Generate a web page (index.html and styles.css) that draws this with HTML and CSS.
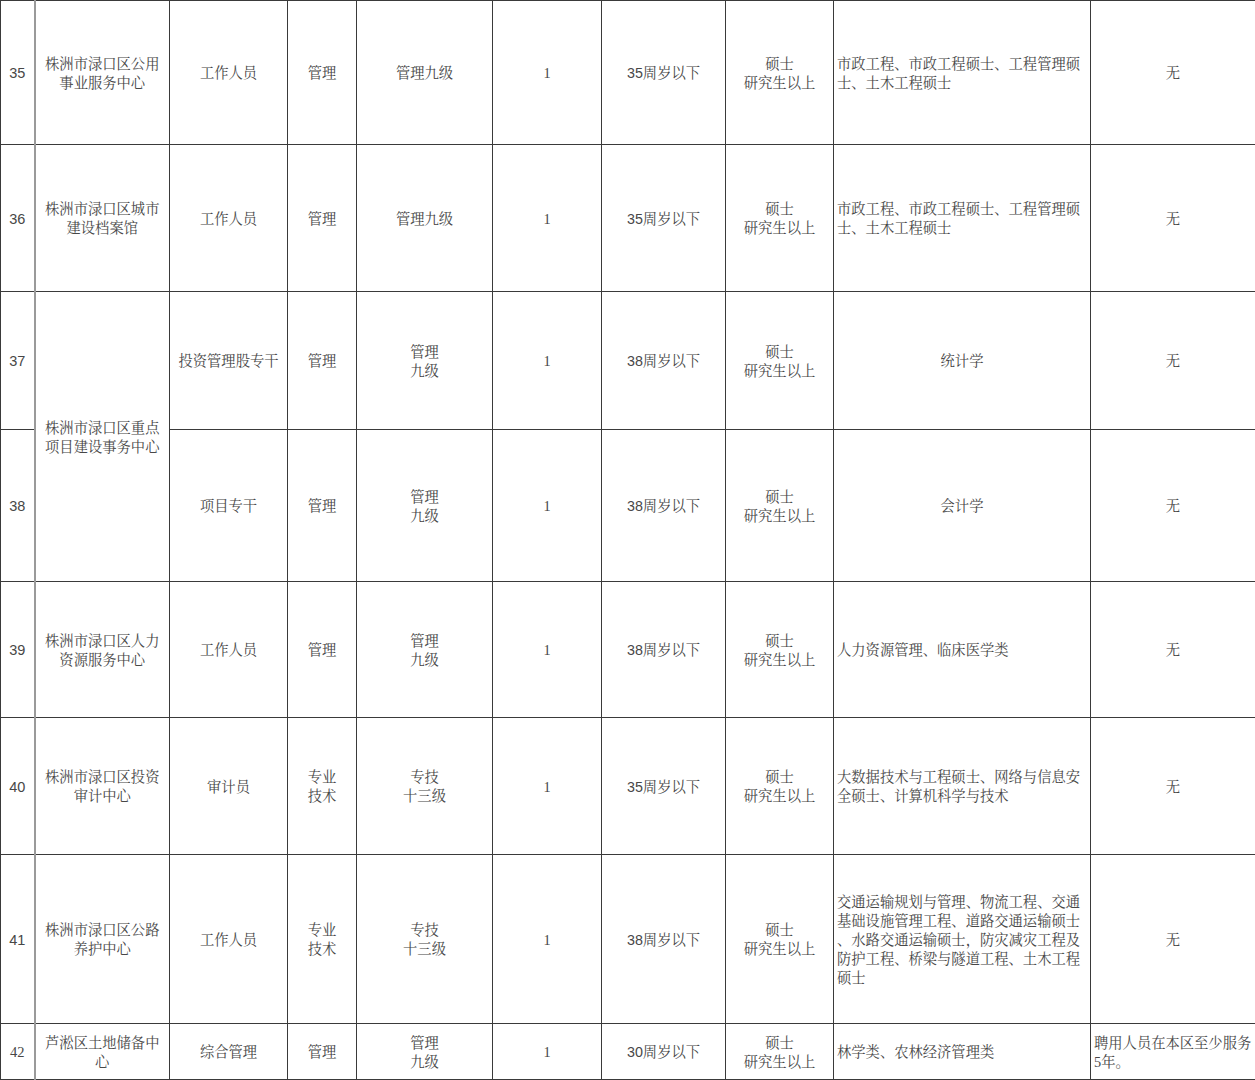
FILE: index.html
```html
<!DOCTYPE html>
<html lang="zh-CN">
<head>
<meta charset="utf-8">
<title>岗位表</title>
<link rel="stylesheet" href="styles.css">
</head>
<body>
<table class="grid">
  <colgroup>
    <col class="c-no">
    <col class="c-unit">
    <col class="c-post">
    <col class="c-type">
    <col class="c-level">
    <col class="c-count">
    <col class="c-age">
    <col class="c-edu">
    <col class="c-major">
    <col class="c-other">
  </colgroup>
  <tbody>
    <tr class="h144">
      <td class="no">35</td>
      <td>株洲市渌口区公用<br>事业服务中心</td>
      <td>工作人员</td>
      <td>管理</td>
      <td>管理九级</td>
      <td class="num">1</td>
      <td class="age">35周岁以下</td>
      <td>硕士<br>研究生以上</td>
      <td class="major">市政工程、市政工程硕士、工程管理硕<br>士、土木工程硕士</td>
      <td>无</td>
    </tr>
    <tr class="h147">
      <td class="no">36</td>
      <td>株洲市渌口区城市<br>建设档案馆</td>
      <td>工作人员</td>
      <td>管理</td>
      <td>管理九级</td>
      <td class="num">1</td>
      <td class="age">35周岁以下</td>
      <td>硕士<br>研究生以上</td>
      <td class="major">市政工程、市政工程硕士、工程管理硕<br>士、土木工程硕士</td>
      <td>无</td>
    </tr>
    <tr class="h138">
      <td class="no">37</td>
      <td rowspan="2">株洲市渌口区重点<br>项目建设事务中心</td>
      <td>投资管理股专干</td>
      <td>管理</td>
      <td>管理<br>九级</td>
      <td class="num">1</td>
      <td class="age">38周岁以下</td>
      <td>硕士<br>研究生以上</td>
      <td>统计学</td>
      <td>无</td>
    </tr>
    <tr class="h152">
      <td class="no">38</td>
      <td>项目专干</td>
      <td>管理</td>
      <td>管理<br>九级</td>
      <td class="num">1</td>
      <td class="age">38周岁以下</td>
      <td>硕士<br>研究生以上</td>
      <td>会计学</td>
      <td>无</td>
    </tr>
    <tr class="h136">
      <td class="no">39</td>
      <td>株洲市渌口区人力<br>资源服务中心</td>
      <td>工作人员</td>
      <td>管理</td>
      <td>管理<br>九级</td>
      <td class="num">1</td>
      <td class="age">38周岁以下</td>
      <td>硕士<br>研究生以上</td>
      <td class="major">人力资源管理、临床医学类</td>
      <td>无</td>
    </tr>
    <tr class="h137">
      <td class="no">40</td>
      <td>株洲市渌口区投资<br>审计中心</td>
      <td>审计员</td>
      <td>专业<br>技术</td>
      <td>专技<br>十三级</td>
      <td class="num">1</td>
      <td class="age">35周岁以下</td>
      <td>硕士<br>研究生以上</td>
      <td class="major">大数据技术与工程硕士、网络与信息安<br>全硕士、计算机科学与技术</td>
      <td>无</td>
    </tr>
    <tr class="h169">
      <td class="no">41</td>
      <td>株洲市渌口区公路<br>养护中心</td>
      <td>工作人员</td>
      <td>专业<br>技术</td>
      <td>专技<br>十三级</td>
      <td class="num">1</td>
      <td class="age">38周岁以下</td>
      <td>硕士<br>研究生以上</td>
      <td class="major">交通运输规划与管理、物流工程、交通<br>基础设施管理工程、道路交通运输硕士<br>、水路交通运输硕士，防灾减灾工程及<br>防护工程、桥梁与隧道工程、土木工程<br>硕士</td>
      <td>无</td>
    </tr>
    <tr class="h56">
      <td class="no serif">42</td>
      <td>芦淞区土地储备中<br>心</td>
      <td>综合管理</td>
      <td>管理</td>
      <td>管理<br>九级</td>
      <td class="num">1</td>
      <td class="age">30周岁以下</td>
      <td>硕士<br>研究生以上</td>
      <td class="major">林学类、农林经济管理类</td>
      <td class="note">聘用人员在本区至少服务<br>5年。</td>
    </tr>
  </tbody>
</table>
</body>
</html>
```

FILE: styles.css
```css
html, body {
  margin: 0;
  padding: 0;
  background: #ffffff;
}

.grid {
  border-collapse: collapse;
  table-layout: fixed;
  width: 1255px;
  font-family: "Liberation Serif", "Noto Serif CJK SC", "Noto Sans CJK SC", serif;
  font-size: 14.3px;
  line-height: 19px;
  color: #474747;
}

.c-no { width: 34px; }
.c-unit { width: 135px; }
.c-post { width: 118px; }
.c-type { width: 69px; }
.c-level { width: 136px; }
.c-count { width: 109px; }
.c-age { width: 124px; }
.c-edu { width: 108px; }
.c-major { width: 257px; }
.c-other { width: 165px; }

.grid td {
  border: 1px solid #3a3a3a;
  text-align: center;
  vertical-align: middle;
  padding: 2px 3px 0;
  white-space: nowrap;
  overflow: hidden;
}

.grid td.no {
  border-right: 2px solid #9a9a9a;
  font-family: "Liberation Sans", "Noto Sans CJK SC", sans-serif;
  font-size: 14.5px;
}

.grid td.no.serif {
  font-family: "Liberation Serif", "Noto Sans CJK SC", serif;
}

.grid td.age {
  font-family: "Liberation Sans", "Noto Serif CJK SC", "Noto Sans CJK SC", sans-serif;
}

.grid td.major,
.grid td.note {
  text-align: left;
}

.h144 { height: 144px; }
.h147 { height: 147px; }
.h138 { height: 138px; }
.h152 { height: 152px; }
.h136 { height: 136px; }
.h137 { height: 137px; }
.h169 { height: 169px; }
.h56 { height: 56px; }
```
